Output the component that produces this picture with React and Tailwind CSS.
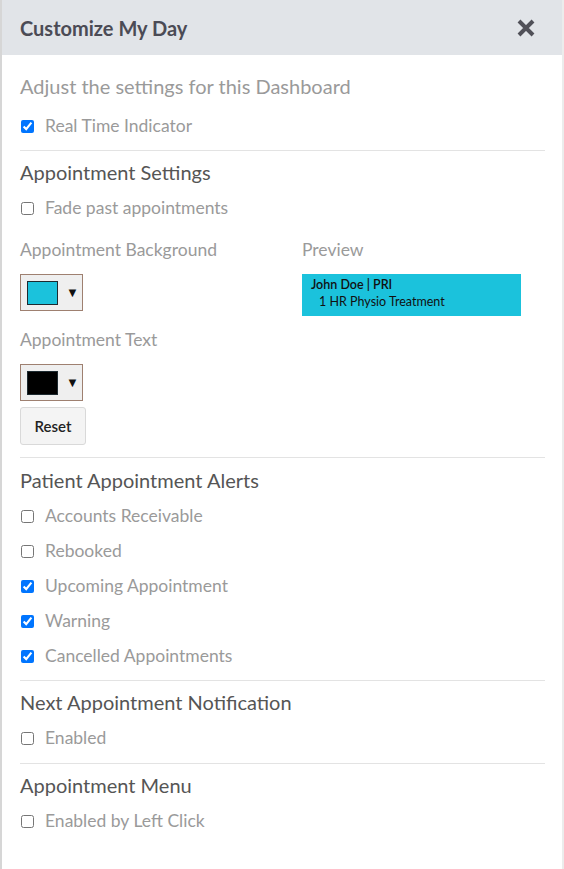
import React from "react";

const CheckRow = ({ label, checked, className = "h-[28px]" }) => (
  <label className={`flex items-center ${className}`}>
    <input
      type="checkbox"
      defaultChecked={checked}
      className="w-[13px] h-[13px] ml-[1px] mr-[11px]"
    />
    <span className="text-[17.5px] text-[#9a9a9a]">{label}</span>
  </label>
);

const ColorPicker = ({ color }) => (
  <div className="w-[63px] h-[37px] border border-[#9e8070] bg-[#efefef] flex items-center pl-[6px] gap-[8px]">
    <div className={`w-[31px] h-[24px] border border-[#1d2a30] ${color}`} />
    <span className="text-[13px] text-[#111] leading-none">▼</span>
  </div>
);

const Heading = ({ children, className = "" }) => (
  <h3 className={`h-[26px] flex items-center text-[20px] text-[#555] ${className}`}>
    {children}
  </h3>
);

const Divider = ({ className = "" }) => (
  <hr className={`border-t border-[#e3e3e3] mr-[17px] ${className}`} />
);

const App = () => {
  const alerts = [
    { label: "Accounts Receivable", checked: false },
    { label: "Rebooked", checked: false },
    { label: "Upcoming Appointment", checked: true },
    { label: "Warning", checked: true },
    { label: "Cancelled Appointments", checked: true },
  ];

  return (
    <div
      className="w-[564px] h-[869px] bg-white border-l-2 border-[#d6d6d6] overflow-hidden"
      style={{ fontFamily: "Lato, 'Open Sans', sans-serif" }}
    >
      <div className="h-[869px] border-r-2 border-[#ececec]">
        {/* header */}
        <div className="h-[55px] bg-[#e1e4e8] flex items-center justify-between pl-[18px] pr-[27px]">
          <h2 className="text-[20px] font-bold text-[#4b4b55]">Customize My Day</h2>
          <svg width="18" height="18" viewBox="0 0 18 18">
            <path
              d="M2 2 L16 16 M16 2 L2 16"
              stroke="#505058"
              strokeWidth="4"
              strokeLinecap="butt"
            />
          </svg>
        </div>

        <div className="pl-[18px] flex flex-col">
          <p className="mt-[19px] h-[24px] flex items-center text-[20px] text-[#9a9a9a]">
            Adjust the settings for this Dashboard
          </p>
          <CheckRow className="mt-[14px] h-[28px]" label="Real Time Indicator" checked />
          <Divider className="mt-[10px]" />

          <Heading className="mt-[8px]">Appointment Settings</Heading>
          <CheckRow className="mt-[9px] h-[28px]" label="Fade past appointments" />

          <div className="mt-[16px] flex">
            <div className="w-[282px]">
              <p className="h-[24px] flex items-center text-[17.5px] text-[#9a9a9a]">
                Appointment Background
              </p>
              <div className="mt-[12px]">
                <ColorPicker color="bg-[#1bc2dc]" />
              </div>
            </div>
            <div>
              <p className="h-[24px] flex items-center text-[17.5px] text-[#9a9a9a]">Preview</p>
              <div className="mt-[12px] w-[219px] h-[42px] bg-[#1bc2dc] pl-[9px] pt-[2px] text-[12.5px] leading-[17px] text-[#111]">
                <div className="font-semibold">John Doe | PRI</div>
                <div className="pl-[8px]">1 HR Physio Treatment</div>
              </div>
            </div>
          </div>

          <p className="mt-[12px] h-[24px] flex items-center text-[17.5px] text-[#9a9a9a]">
            Appointment Text
          </p>
          <div className="mt-[12px]">
            <ColorPicker color="bg-black" />
          </div>
          <div className="mt-[6px]">
            <button className="w-[66px] h-[38px] bg-[#f4f4f4] border border-[#d9d9d9] rounded-[3px] text-[15px] font-semibold text-[#222]">
              Reset
            </button>
          </div>
          <Divider className="mt-[12px]" />

          <Heading className="mt-[9px]">Patient Appointment Alerts</Heading>
          <div className="mt-[6px] flex flex-col">
            {alerts.map((a) => (
              <CheckRow key={a.label} className="h-[35px]" label={a.label} checked={a.checked} />
            ))}
          </div>
          <Divider className="mt-[6px]" />

          <Heading className="mt-[8px]">Next Appointment Notification</Heading>
          <CheckRow className="mt-[9px] h-[28px]" label="Enabled" />
          <Divider className="mt-[11px]" />

          <Heading className="mt-[8px]">Appointment Menu</Heading>
          <CheckRow className="mt-[9px] h-[28px]" label="Enabled by Left Click" />
        </div>
      </div>
    </div>
  );
};

export default App;
